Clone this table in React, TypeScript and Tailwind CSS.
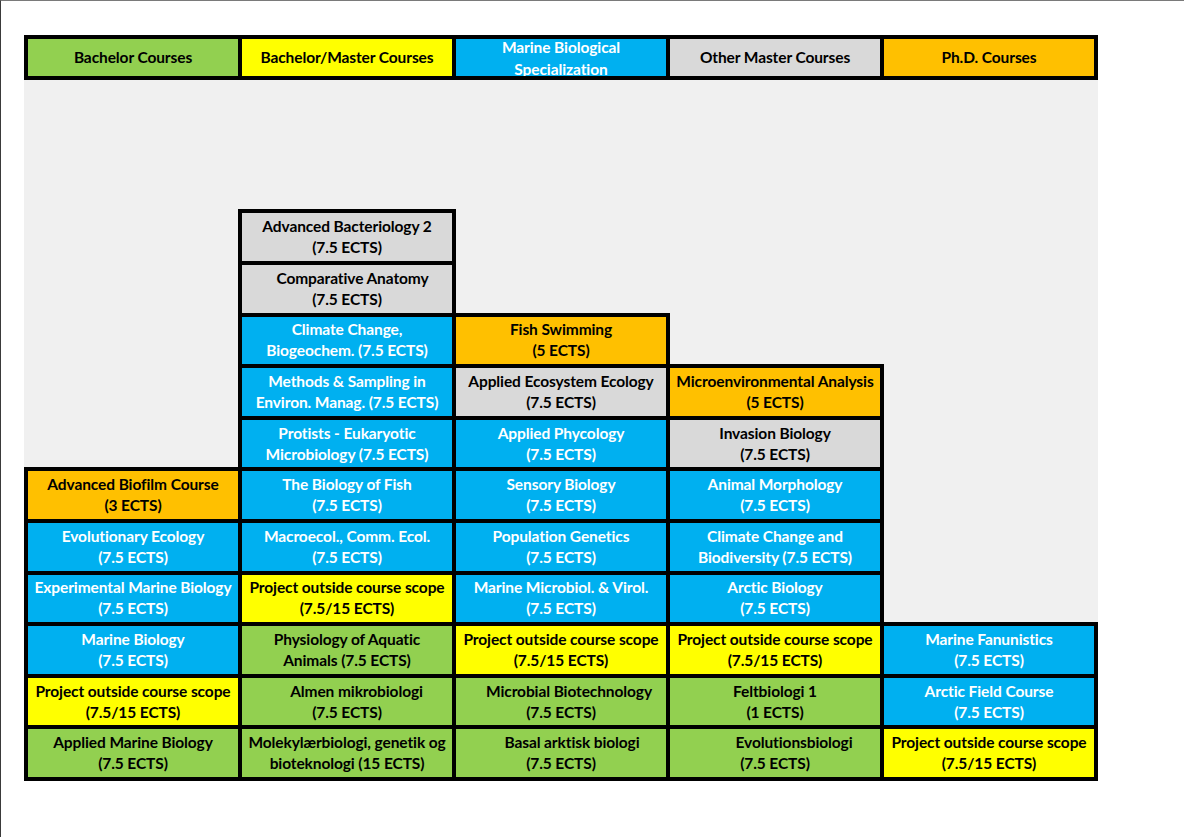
type Tone = "green" | "yellow" | "blue" | "gray" | "orange";

interface Course {
  line1: string;
  line2: string;
  tone: Tone;
  indent?: string;
}

const toneClass: Record<Tone, string> = {
  green: "bg-[#92d050] text-black",
  yellow: "bg-[#ffff00] text-black",
  blue: "bg-[#00b0f0] text-white",
  gray: "bg-[#d9d9d9] text-black",
  orange: "bg-[#ffc000] text-black",
};

const headers: { label: string; tone: Tone; wrap?: boolean }[] = [
  { label: "Bachelor Courses", tone: "green" },
  { label: "Bachelor/Master Courses", tone: "yellow" },
  { label: "Marine Biological Specialization", tone: "blue", wrap: true },
  { label: "Other Master Courses", tone: "gray" },
  { label: "Ph.D. Courses", tone: "orange" },
];

const project: Course = {
  line1: "Project outside course scope",
  line2: "(7.5/15 ECTS)",
  tone: "yellow",
};

const columns: Course[][] = [
  [
    { line1: "Advanced Biofilm Course", line2: "(3 ECTS)", tone: "orange" },
    { line1: "Evolutionary Ecology", line2: "(7.5 ECTS)", tone: "blue" },
    { line1: "Experimental Marine Biology", line2: "(7.5 ECTS)", tone: "blue" },
    { line1: "Marine Biology", line2: "(7.5 ECTS)", tone: "blue" },
    project,
    { line1: "Applied Marine Biology", line2: "(7.5 ECTS)", tone: "green" },
  ],
  [
    { line1: "Advanced Bacteriology 2", line2: "(7.5 ECTS)", tone: "gray" },
    { line1: "Comparative Anatomy", line2: "(7.5 ECTS)", tone: "gray", indent: "pl-[11px]" },
    { line1: "Climate Change,", line2: "Biogeochem. (7.5 ECTS)", tone: "blue" },
    { line1: "Methods & Sampling in", line2: "Environ. Manag. (7.5 ECTS)", tone: "blue" },
    { line1: "Protists - Eukaryotic", line2: "Microbiology (7.5 ECTS)", tone: "blue" },
    { line1: "The Biology of Fish", line2: "(7.5 ECTS)", tone: "blue" },
    { line1: "Macroecol., Comm. Ecol.", line2: "(7.5 ECTS)", tone: "blue" },
    project,
    { line1: "Physiology of Aquatic", line2: "Animals (7.5 ECTS)", tone: "green" },
    { line1: "Almen mikrobiologi", line2: "(7.5 ECTS)", tone: "green", indent: "pl-[19px]" },
    { line1: "Molekylærbiologi, genetik og", line2: "bioteknologi (15 ECTS)", tone: "green" },
  ],
  [
    { line1: "Fish Swimming", line2: "(5 ECTS)", tone: "orange" },
    { line1: "Applied Ecosystem Ecology", line2: "(7.5 ECTS)", tone: "gray" },
    { line1: "Applied Phycology", line2: "(7.5 ECTS)", tone: "blue" },
    { line1: "Sensory Biology", line2: "(7.5 ECTS)", tone: "blue" },
    { line1: "Population Genetics", line2: "(7.5 ECTS)", tone: "blue" },
    { line1: "Marine Microbiol. & Virol.", line2: "(7.5 ECTS)", tone: "blue" },
    project,
    { line1: "Microbial Biotechnology", line2: "(7.5 ECTS)", tone: "green", indent: "pl-[16px]" },
    { line1: "Basal arktisk biologi", line2: "(7.5 ECTS)", tone: "green", indent: "pl-[22px]" },
  ],
  [
    { line1: "Microenvironmental Analysis", line2: "(5 ECTS)", tone: "orange" },
    { line1: "Invasion Biology", line2: "(7.5 ECTS)", tone: "gray" },
    { line1: "Animal Morphology", line2: "(7.5 ECTS)", tone: "blue" },
    { line1: "Climate Change and", line2: "Biodiversity (7.5 ECTS)", tone: "blue" },
    { line1: "Arctic Biology", line2: "(7.5 ECTS)", tone: "blue" },
    project,
    { line1: "Feltbiologi 1", line2: "(1 ECTS)", tone: "green" },
    { line1: "Evolutionsbiologi", line2: "(7.5 ECTS)", tone: "green", indent: "pl-[38px]" },
  ],
  [
    { line1: "Marine Fanunistics", line2: "(7.5 ECTS)", tone: "blue" },
    { line1: "Arctic Field Course", line2: "(7.5 ECTS)", tone: "blue" },
    project,
  ],
];

function CourseCell({ course }: { course: Course }) {
  return (
    <div
      className={`flex h-[47.6px] w-[210px] flex-col items-center justify-center whitespace-nowrap ${toneClass[course.tone]}`}
    >
      <span className={course.indent}>{course.line1}</span>
      <span>{course.line2}</span>
    </div>
  );
}

export default function App() {
  return (
    <div
      className="h-[837px] w-[1184px] overflow-hidden border-t border-l border-t-[#7a7a7a] border-l-[#3a3a3a] bg-white text-[15.5px] font-bold leading-[21px] tracking-[-0.1px]"
      style={{ fontFamily: "Lato, 'Liberation Sans', sans-serif" }}
    >
      <div className="ml-[23px] mt-[34px] w-[1074px]">
        <div className="flex gap-1 bg-black p-1">
          {headers.map((h) => (
            <div
              key={h.label}
              className={`flex h-[37px] w-[210px] items-center justify-center overflow-hidden text-center ${toneClass[h.tone]}`}
            >
              <span
                className={
                  h.wrap ? "block w-[150px] leading-[22px]" : "whitespace-nowrap"
                }
              >
                {h.label}
              </span>
            </div>
          ))}
        </div>
        <div className="flex h-[701px] items-end bg-[#f0f0f0]">
          {columns.map((col, i) => (
            <div
              key={i}
              className={`flex flex-col gap-1 bg-black p-1 ${i > 0 ? "-ml-1" : ""}`}
            >
              {col.map((c, j) => (
                <CourseCell key={j} course={c} />
              ))}
            </div>
          ))}
        </div>
      </div>
    </div>
  );
}
